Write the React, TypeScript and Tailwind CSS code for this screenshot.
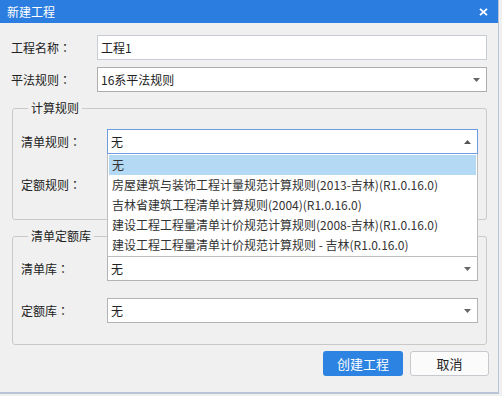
import React from 'react';

const font = { fontFamily: '"Noto Sans CJK SC", "Liberation Sans", sans-serif' };

const qdOptions = [
  '无',
  '房屋建筑与装饰工程计量规范计算规则(2013-吉林)(R1.0.16.0)',
  '吉林省建筑工程清单计算规则(2004)(R1.0.16.0)',
  '建设工程工程量清单计价规范计算规则(2008-吉林)(R1.0.16.0)',
  '建设工程工程量清单计价规范计算规则 - 吉林(R1.0.16.0)',
];

function Caret({ up = false }: { up?: boolean }) {
  return (
    <svg width="7" height="4" viewBox="0 0 7 4" className="shrink-0">
      {up ? <path d="M3.5 0 L7 4 L0 4 Z" fill="#555" /> : <path d="M0 0 L7 0 L3.5 4 Z" fill="#666" />}
    </svg>
  );
}

function Select({ value, focused = false, border = 'border-[#adadad]', children }: {
  value: string;
  focused?: boolean;
  border?: string;
  children?: React.ReactNode;
}) {
  return (
    <div className="relative flex-1">
      <div
        className={`h-[25px] bg-white border flex items-center pl-[3px] pr-[6px] ${
          focused ? 'border-[#6f9be3]' : border
        }`}
      >
        <span className="flex-1 text-[12px] leading-none text-[#222]">{value}</span>
        <Caret up={focused} />
      </div>
      {children}
    </div>
  );
}

function Row({ label, children, className = '' }: { label: string; children: React.ReactNode; className?: string }) {
  return (
    <div className={`flex items-center ${className}`}>
      <span className="w-[86px] shrink-0 text-[12px] leading-none text-[#222]">
        {label}
        <span className="font-['Noto_Sans_CJK_TC']">：</span>
      </span>
      {children}
    </div>
  );
}

export default function App() {
  return (
    <div className="w-[502px] h-[396px] bg-[#f0f0f0] overflow-hidden" style={font}>
      <div className="w-[499px] h-[394px] flex flex-col border-r border-b-2 border-[#b9c4d7]">
        {/* Title bar */}
        <div className="h-[23px] shrink-0 bg-[#2b7ee0] flex items-center justify-between pl-[7px] pr-[10px]">
          <span className="text-white text-[12px] leading-none">新建工程</span>
          <svg width="9" height="8" viewBox="0 0 9 8">
            <path d="M1 0.8 L8 7.2 M8 0.8 L1 7.2" stroke="#fff" strokeWidth="1.8" />
          </svg>
        </div>

        <div className="flex flex-col pl-[11px] pr-[11px] pt-[12px]">
          <Row label="工程名称">
            <div className="flex-1 h-[25px] bg-white border border-[#c8ccd3] flex items-center pl-[3px]">
              <span className="text-[12px] leading-none text-[#222]">工程1</span>
            </div>
          </Row>
          <Row label="平法规则" className="mt-[7px]">
            <Select value="16系平法规则" />
          </Row>

          {/* 计算规则 */}
          <fieldset className="mt-[8px] ml-px border border-[#c9c9c9] rounded-[3px] px-[8px] pt-[13px] pb-[22px] relative z-10">
            <legend className="ml-[7px] px-[3px] text-[12px] leading-[16px] text-[#222]">计算规则</legend>
            <Row label="清单规则">
              <Select value="无" focused>
                <div className="absolute z-20 left-0 right-0 top-full bg-white border border-t-0 border-[#bdbdbd] p-px">
                  {qdOptions.map((o, i) => (
                    <div
                      key={o}
                      className={`h-[20px] flex items-center pl-[3px] text-[12px] leading-none text-[#333] whitespace-nowrap ${
                        i === 0 ? 'bg-[#b4d9f4]' : ''
                      }`}
                    >
                      {o}
                    </div>
                  ))}
                </div>
              </Select>
            </Row>
            <Row label="定额规则" className="mt-[18px]">
              <Select value="无" />
            </Row>
          </fieldset>

          {/* 清单定额库 */}
          <fieldset className="mt-[8px] ml-px border border-[#c9c9c9] rounded-[3px] px-[8px] pt-[12px] pb-[21px]">
            <legend className="ml-[7px] px-[3px] text-[12px] leading-[16px] text-[#222]">清单定额库</legend>
            <Row label="清单库">
              <Select value="无" border="border-[#b3b3b3]" />
            </Row>
            <Row label="定额库" className="mt-[17px]">
              <Select value="无" border="border-[#b3b3b3]" />
            </Row>
          </fieldset>

          <div className="flex justify-end gap-[7px] mt-[6px] mr-[-2px]">
            <button className="w-[80px] h-[25px] rounded-[3px] bg-[#2d83e1] text-white text-[13px] leading-none">
              创建工程
            </button>
            <button className="w-[79px] h-[25px] rounded-[3px] bg-[#fbfbfb] border border-[#c6c9ce] text-[#222] text-[13px] leading-none">
              取消
            </button>
          </div>
        </div>
      </div>
    </div>
  );
}
